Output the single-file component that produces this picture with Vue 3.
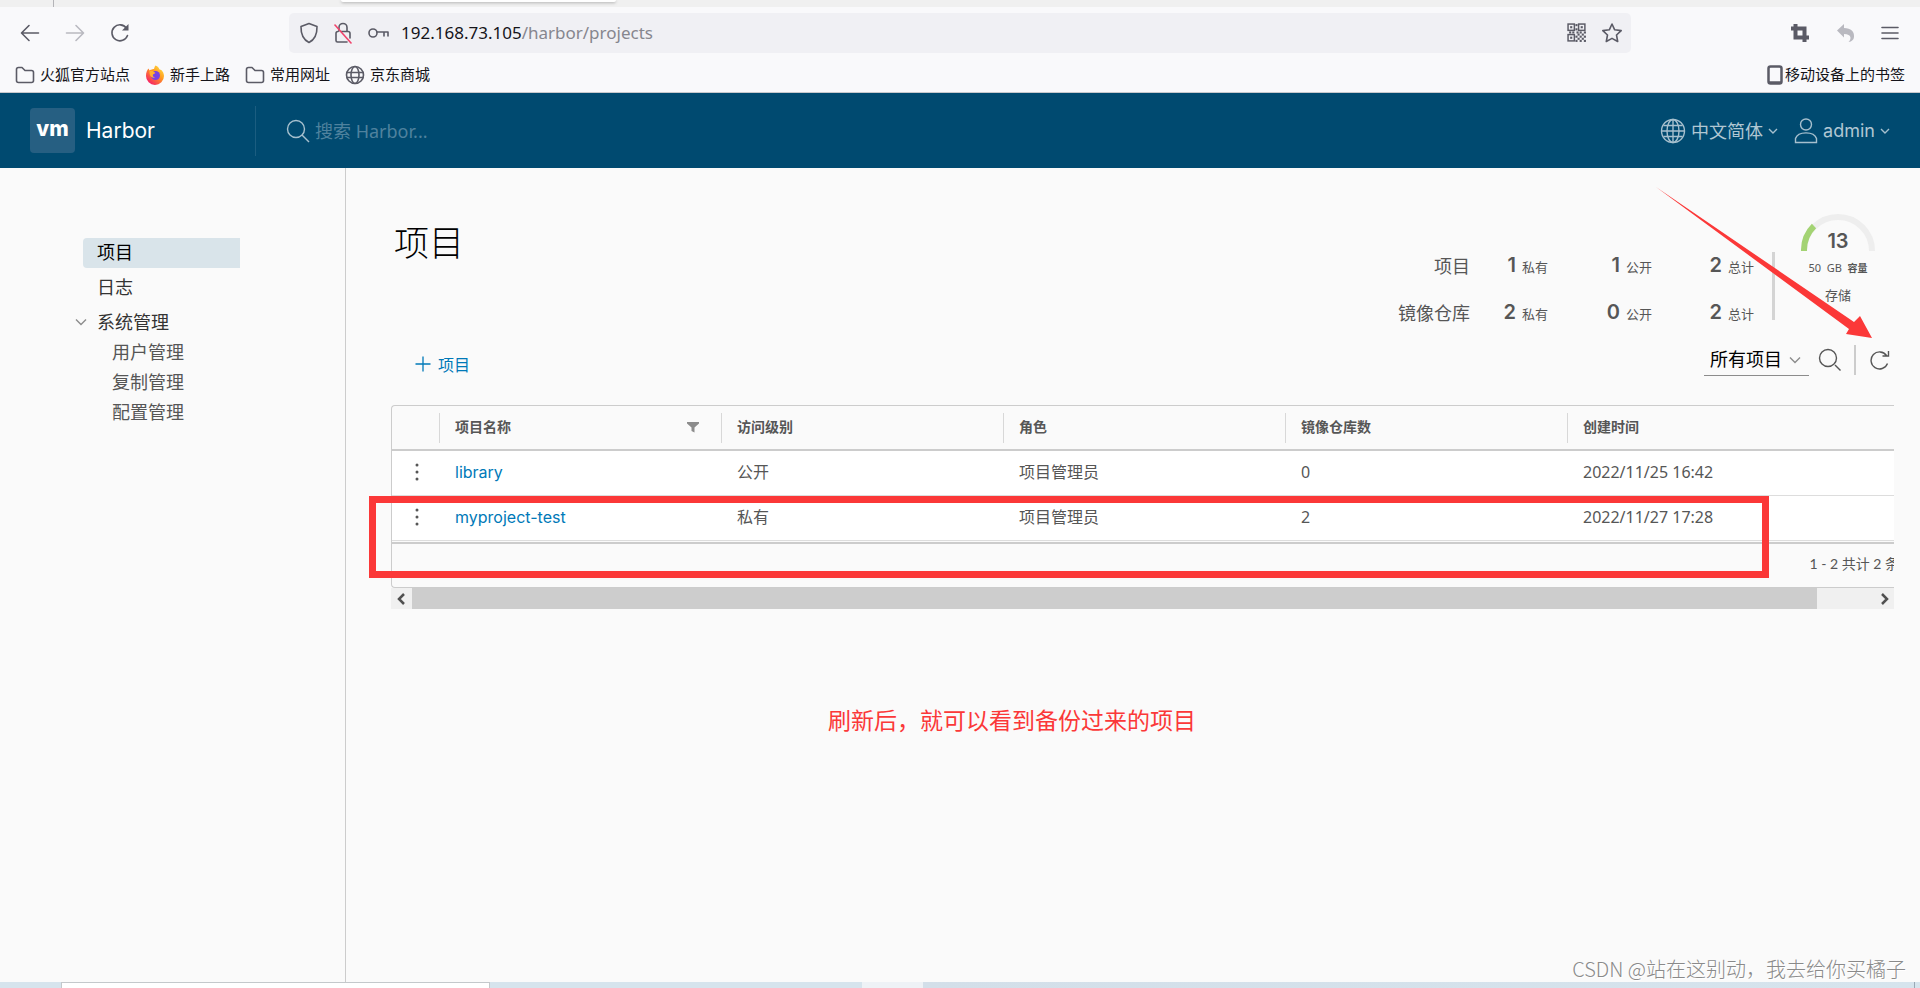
<script setup>
import { ref } from 'vue'

const query = ref('')
const scope = ref('所有项目')

const bookmarks = [
  { icon: 'folder', text: '火狐官方站点' },
  { icon: 'firefox', text: '新手上路' },
  { icon: 'folder', text: '常用网址' },
  { icon: 'globe', text: '京东商城' },
]

const adminLinks = ['用户管理', '复制管理', '配置管理']

const stats = [
  { label: '项目', values: [[1, '私有'], [1, '公开'], [2, '总计']] },
  { label: '镜像仓库', values: [[2, '私有'], [0, '公开'], [2, '总计']] },
]

const projects = [
  { name: 'library', access: '公开', role: '项目管理员', repos: 0, created: '2022/11/25 16:42' },
  { name: 'myproject-test', access: '私有', role: '项目管理员', repos: 2, created: '2022/11/27 17:28' },
]

const qrFinders = [[1, 1], [11, 1], [1, 11]]
const qrDots = [[8, 1], [8, 5], [9, 8], [2, 8], [5, 8], [12, 8], [16, 8], [10, 10], [14, 10], [12, 12], [16, 12], [10, 14], [14, 14], [12, 16], [16, 16], [8, 12], [8, 16]]
</script>

<template>
  <div class="screen">
    <div class="tabs"><span class="tab-line"></span><span class="tab-active"></span></div>

    <div class="browser-bar">
      <div class="nav-buttons">
        <button type="button" aria-label="后退">
          <svg width="20" height="20" viewBox="0 0 20 20" class="ico dark"><path d="M18.500 10H2M9 2.500L1.500 10L9 17.500" /></svg>
        </button>
        <button type="button" aria-label="前进">
          <svg width="20" height="20" viewBox="0 0 20 20" class="ico pale"><path d="M1.500 10H18M11 2.500L18.500 10L11 17.500" /></svg>
        </button>
        <button type="button" aria-label="刷新">
          <svg width="20" height="20" viewBox="0 0 20 20" class="ico dark"><path d="M17.500 12.500A8 8 0 1 1 16.500 5.200" /><path class="fill" d="M18.500 1V7.500H12Z" /></svg>
        </button>
      </div>

      <div class="url-bar">
        <svg width="20" height="22" viewBox="0 0 20 22" class="ico dark"><path d="M10 1.500L18 4.500C18.200 12 16 17.500 10 20.500C4 17.500 1.800 12 2 4.500Z" /></svg>
        <svg width="20" height="22" viewBox="0 0 20 22" class="ico dark"><path d="M6 9V5.500A4 4 0 0 1 14 5.500V9M8 9.500H15Q17 9.500 17 11.500V16M14 20H4.500Q3 20 3 18.500V11.500Q3 9.500 5 9.500" /><path class="strike" d="M2 3L18 21" /></svg>
        <svg width="22" height="22" viewBox="0 0 22 22" class="ico dark"><circle cx="6" cy="11" r="4" /><path d="M10 10H21V14M17 10V14" /></svg>
        <span class="url"><b>192.168.73.105</b>/harbor/projects</span>
        <svg width="20" height="20" viewBox="0 0 19 19" class="qr">
          <g v-for="p in qrFinders" :key="p.join('-')">
            <rect class="finder" :x="p[0]" :y="p[1]" width="6" height="6" />
            <rect :x="p[0] + 2" :y="p[1] + 2" width="2" height="2" />
          </g>
          <rect v-for="d in qrDots" :key="d.join('.')" :x="d[0]" :y="d[1]" width="2" height="2" />
        </svg>
        <svg width="22" height="22" viewBox="0 0 22 22" class="ico dark star"><path d="M11 2L13.700 7.800L20.200 8.600L15.500 13L16.700 19.500L11 16.400L5.300 19.500L6.500 13L1.800 8.600L8.300 7.800Z" /></svg>
      </div>

      <div class="tools">
        <button type="button" aria-label="截图">
          <svg width="20" height="20" viewBox="0 0 20 20" class="ico dark crop"><path d="M1 5.500H14.500V19M5.500 1V14.500H19" /></svg>
        </button>
        <button type="button" aria-label="撤销">
          <svg width="20" height="20" viewBox="0 0 20 20" class="undo"><path d="M1 7.500L8 1V5C15 5 18.500 8.500 18 14C17.700 16.800 16 18.500 12.500 19C15.500 16.500 16 11 8 11V14.500Z" /></svg>
        </button>
        <button type="button" aria-label="菜单">
          <svg width="18" height="18" viewBox="0 0 18 18" class="ico dark"><path d="M1 3.500H17M1 9H17M1 14.500H17" /></svg>
        </button>
      </div>
    </div>

    <div class="bookmarks">
      <a v-for="b in bookmarks" :key="b.text" href="#">
        <svg v-if="b.icon === 'folder'" width="20" height="20" viewBox="0 0 20 20" class="ico dark"><path d="M1.500 15.500V4.500Q1.500 2.500 3.500 2.500H7L10 5.500H16.500Q18.500 5.500 18.500 7.500V15.500Q18.500 17.500 16.500 17.500H3.500Q1.500 17.500 1.500 15.500Z" /></svg>
        <svg v-else-if="b.icon === 'firefox'" width="20" height="20" viewBox="0 0 20 20">
          <defs>
            <linearGradient id="flame" x1="1" y1="0" x2="0.2" y2="1">
              <stop offset="0" stop-color="#fff44f" /><stop offset="0.45" stop-color="#ff9a1f" /><stop offset="1" stop-color="#f5156c" />
            </linearGradient>
          </defs>
          <path fill="url(#flame)" d="M10.500 0.500C13 1.500 14 3 14.500 4.500C16 4 19 7 19 11A9 9 0 0 1 1 11C1 7.500 2.200 5 3.500 3.500L4.500 5.500C6 4.500 8 4 9 4C9.500 2.500 9.600 1.500 10.500 0.500Z" />
          <circle cx="10.500" cy="10.500" r="4.500" fill="#7542e5" />
          <path fill="#ffb22e" d="M4.500 6C7 5 9 6.500 10.500 8L8 9.500C7.500 10.500 8 12 10 12.500C7 13.500 4 11 4.500 6Z" />
        </svg>
        <svg v-else width="20" height="20" viewBox="0 0 20 20" class="ico dark"><circle cx="10" cy="10" r="8.500" /><ellipse cx="10" cy="10" rx="4" ry="8.500" /><path d="M2 7.500H18M2 12.500H18" /></svg>
        <span>{{ b.text }}</span>
      </a>
      <a href="#" class="mobile">
        <svg width="16" height="20" viewBox="0 0 16 20" class="phone"><rect x="1.500" y="1.500" width="13" height="17" rx="2" /><path d="M1.500 17.500H14.500" /></svg>
        <span>移动设备上的书签</span>
      </a>
    </div>

    <header class="app-header">
      <a href="#" class="brand"><span class="logo">vm</span><span class="brand-name">Harbor</span></a>
      <label class="search">
        <svg width="24" height="24" viewBox="0 0 24 24" class="thin"><circle cx="10" cy="10" r="8.500" /><path d="M16 16L23 23" /></svg>
        <input v-model="query" type="text" placeholder="搜索 Harbor..." aria-label="搜索 Harbor" />
      </label>
      <div class="account">
        <button type="button">
          <svg width="26" height="26" viewBox="0 0 26 26" class="thin"><circle cx="13" cy="13" r="11.500" /><ellipse cx="13" cy="13" rx="6" ry="11.500" /><path d="M13 1.500V24.500M1.500 13H24.500M3.500 7.500H22.500M3.500 18.500H22.500" /></svg>
          <span>中文简体</span>
          <svg width="10" height="10" viewBox="0 0 10 10" class="thin"><path d="M1 3L5 7L9 3" /></svg>
        </button>
        <button type="button">
          <svg width="24" height="26" viewBox="0 0 24 26" class="thin"><circle cx="12" cy="6.500" r="5.500" /><path d="M1.500 24.500V20.500C4 13 20 13 22.500 20.500V24.500Z" /></svg>
          <span>admin</span>
          <svg width="10" height="10" viewBox="0 0 10 10" class="thin"><path d="M1 3L5 7L9 3" /></svg>
        </button>
      </div>
    </header>

    <div class="body">
      <nav class="sidebar">
        <a href="#" class="active">项目</a>
        <a href="#">日志</a>
        <div class="group">
          <button type="button" class="group-title">
            <svg width="12" height="12" viewBox="0 0 12 12"><path d="M1 3.500L6 8.500L11 3.500" /></svg>
            <span>系统管理</span>
          </button>
          <a v-for="l in adminLinks" :key="l" href="#" class="sub">{{ l }}</a>
        </div>
      </nav>

      <main class="main">
        <section class="summary">
          <h1>项目</h1>
          <div class="stats">
            <template v-for="s in stats" :key="s.label">
              <span class="stat-label">{{ s.label }}</span>
              <span v-for="v in s.values" :key="v[1]" class="stat"><b>{{ v[0] }}</b>{{ v[1] }}</span>
            </template>
          </div>
          <div class="gauge">
            <div class="dial">
              <svg width="76" height="39" viewBox="0 0 76 39">
                <path class="track" d="M4 39A34 34 0 0 1 72 39" />
                <path class="value" d="M4 39A34 34 0 0 1 14 14" />
              </svg>
              <b>13</b>
            </div>
            <span class="capacity">50 &nbsp;GB &nbsp;<b>容量</b></span>
            <span class="storage">存储</span>
          </div>
        </section>

        <section class="toolbar">
          <button type="button" class="new">
            <svg width="16" height="16" viewBox="0 0 16 16"><path d="M8 0.500V15.500M0.500 8H15.500" /></svg>
            <span>项目</span>
          </button>
          <div class="filters">
            <span class="select">
              <select v-model="scope" aria-label="项目范围"><option>所有项目</option></select>
              <svg width="12" height="12" viewBox="0 0 12 12"><path d="M1 3.500L6 8.500L11 3.500" /></svg>
            </span>
            <button type="button" aria-label="搜索">
              <svg width="24" height="24" viewBox="0 0 24 24"><circle cx="10" cy="10" r="8.500" /><path d="M17 17L22.500 22.500" /></svg>
            </button>
            <button type="button" aria-label="刷新" class="reload">
              <svg width="20" height="22" viewBox="0 0 20 22"><path d="M17.500 14.500A8.500 8.500 0 1 1 16.500 6.500M18.500 2V7H12.500" /></svg>
            </button>
          </div>
        </section>

        <section class="grid-area">
          <div class="grid-view">
            <table>
              <colgroup><col class="c-action" /><col class="c" /><col class="c" /><col class="c" /><col class="c" /><col /></colgroup>
              <thead>
                <tr>
                  <th></th>
                  <th>
                    <div class="th">
                      项目名称
                      <button type="button" aria-label="筛选"><svg width="12" height="12" viewBox="0 0 12 12"><path d="M0 1H12V2.500L7.500 6.500V11.500L4.500 10V6.500L0 2.500Z" /></svg></button>
                    </div>
                  </th>
                  <th><div class="th">访问级别</div></th>
                  <th><div class="th">角色</div></th>
                  <th><div class="th">镜像仓库数</div></th>
                  <th><div class="th">创建时间</div></th>
                </tr>
              </thead>
              <tbody>
                <tr v-for="p in projects" :key="p.name">
                  <td class="action">
                    <button type="button" aria-label="操作"><svg width="4" height="18" viewBox="0 0 4 18"><circle cx="2" cy="2" r="1.500" /><circle cx="2" cy="9" r="1.500" /><circle cx="2" cy="16" r="1.500" /></svg></button>
                  </td>
                  <td><a href="#">{{ p.name }}</a></td>
                  <td>{{ p.access }}</td>
                  <td>{{ p.role }}</td>
                  <td>{{ p.repos }}</td>
                  <td>{{ p.created }}</td>
                </tr>
              </tbody>
            </table>
            <div class="pager">1 - 2 共计 2 条</div>
          </div>
          <div class="scrollbar">
            <button type="button" aria-label="向左滚动"><svg width="10" height="12" viewBox="0 0 10 12"><path d="M7 1L2 6L7 11" /></svg></button>
            <span class="thumb"></span>
            <button type="button" aria-label="向右滚动"><svg width="10" height="12" viewBox="0 0 10 12"><path d="M3 1L8 6L3 11" /></svg></button>
          </div>
          <div class="mark-box"></div>
        </section>

        <p class="note">刷新后，就可以看到备份过来的项目</p>

        <svg class="mark-arrow" width="217" height="152" viewBox="0 0 217 152"><path d="M0 0L198 135L204 129L216 151L190 147L193 142Z" /></svg>
      </main>
    </div>

    <div class="desk"><span class="desk-window"></span><span class="desk-light"></span><span class="desk-rest"></span></div>
    <div class="watermark">CSDN @站在这别动，我去给你买橘子</div>
  </div>
</template>

<style>
body { margin: 0; background: #fafafa; }
</style>

<style scoped>
* { box-sizing: border-box; }
.screen {
  position: relative;
  min-height: 100vh;
  display: flex;
  flex-direction: column;
  overflow: hidden;
  background: #fafafa;
  color: #565656;
  font-family: "Noto Sans", "Noto Sans CJK SC", sans-serif;
  font-size: 16px;
}
a { color: inherit; text-decoration: none; }
button {
  display: flex;
  align-items: center;
  padding: 0;
  border: 0;
  background: none;
  color: inherit;
  font: inherit;
}
svg { display: block; flex: none; }

.ico { fill: none; stroke-width: 1.600; stroke-linecap: round; stroke-linejoin: round; }
.dark { stroke: #5b5b66; }
.pale { stroke: #b9b9c0; }
.ico .fill { fill: #5b5b66; stroke: none; }
.ico .strike { stroke: #f0436b; }
.crop { stroke-width: 4; stroke-linecap: butt; stroke-linejoin: miter; }
.undo { fill: #b9b9c0; }

.tabs { display: flex; height: 7px; background: #f0f0f0; }
.tab-line { width: 54px; border-right: 1px solid #b4b4b8; }
.tab-active { width: 275px; height: 2px; margin-left: 287px; border-radius: 0 0 4px 4px; background: #fff; box-shadow: 0 1px 3px #aaa; }

.browser-bar { display: flex; align-items: center; height: 51px; padding: 0 20px; background: #f9f9fb; }
.nav-buttons { display: flex; gap: 25px; width: 269px; }
.url-bar {
  flex: 1;
  display: flex;
  align-items: center;
  gap: 14px;
  height: 40px;
  padding: 0 8px 0 10px;
  border-radius: 5px;
  background: #f0f0f4;
  color: #86868e;
}
.url { flex: 1; margin-left: -2px; font-size: 17px; }
.url b { color: #15141a; font-weight: 400; }
.qr { fill: #5b5b66; }
.qr .finder { fill: none; stroke: #5b5b66; stroke-width: 1.400; }
.tools { display: flex; justify-content: space-between; align-items: center; width: 109px; margin: 0 1px 0 159px; }

.bookmarks { display: flex; align-items: center; gap: 15px; height: 35px; padding: 0 15px; border-bottom: 1px solid #c8c8cc; background: #f9f9fb; color: #15141a; font-size: 15px; line-height: 20px; }
.bookmarks a { display: flex; align-items: center; gap: 5px; }
.bookmarks span { padding-bottom: 2px; }
.bookmarks .mobile { margin-left: auto; gap: 2px; }
.phone { fill: none; stroke: #5b5b66; stroke-width: 2.500; }

.app-header { display: flex; align-items: center; height: 75px; padding: 0 30px; background: #004a70; color: #b0c7d3; font-size: 18px; font-family: Inter, "Noto Sans CJK SC", sans-serif; }
.brand { display: flex; align-items: center; gap: 11px; width: 226px; height: 50px; border-right: 1px solid #1b5d80; }
.logo { width: 45px; height: 45px; border-radius: 4px; background: #265f82; color: #fff; font-size: 21px; font-weight: 800; line-height: 42px; text-align: center; }
.brand-name { color: #fff; font-size: 21px; }
.search { flex: 1; display: flex; align-items: center; gap: 5px; padding-left: 30px; }
.search input { flex: 1; padding: 0; border: 0; outline: 0; background: none; color: #fff; font: inherit; font-family: "Noto Sans", "Noto Sans CJK SC", sans-serif; }
.search input::placeholder { color: #4f829e; opacity: 1; }
.account { display: flex; gap: 16px; }
.account button { gap: 5px; }
.account span { padding-bottom: 1px; }
.thin { fill: none; stroke: #a6c0ce; stroke-width: 1.400; }

.body { flex: 1; display: flex; }
.sidebar { display: flex; flex-direction: column; gap: 5px; width: 346px; padding: 70px 105px 0 83px; border-right: 1px solid #ccc; color: #333; font-size: 18px; line-height: 28px; }
.sidebar a, .group-title { padding-bottom: 2px; }
.sidebar a { padding-left: 14px; }
.sidebar .active { border-radius: 4px 0 0 4px; background: #d9e4ea; color: #000; }
.group { display: flex; flex-direction: column; }
.group-title { gap: 10px; margin-left: -8px; }
.group-title svg { fill: none; stroke: #8c8c8c; stroke-width: 1.400; }
.sidebar .sub { padding-left: 29px; color: #565656; }

.main { position: relative; flex: 1; min-width: 0; padding: 0 26px 0 45px; }
.summary { display: flex; height: 171px; padding-right: 18px; }
h1 { flex: 1; margin: 51px 0 0 3px; color: #000; font-size: 35px; font-weight: 300; line-height: 48px; }
.stats { position: relative; display: grid; grid-template-columns: 72px 78px 104px 102px; grid-template-rows: 47px 47px; align-items: center; justify-items: end; align-self: start; margin-top: 73px; padding-right: 21px; }
.stats::after { content: ""; position: absolute; right: 0; top: 11px; width: 3px; height: 68px; background: #d4d4d4; }
.stat-label { font-size: 18px; }
.stat { display: flex; align-items: baseline; gap: 6px; font-size: 13px; }
.stat b, .dial b { font-family: Inter, sans-serif; font-size: 20px; font-weight: 600; line-height: 24px; }
.gauge { display: flex; flex-direction: column; align-items: center; width: 76px; margin: 44px 0 0 25px; }
.dial { display: grid; justify-items: center; align-items: end; }
.dial > * { grid-area: 1 / 1; }
.dial b { line-height: 20px; }
.dial path { fill: none; stroke-width: 6; }
.dial .track { stroke: #eee; }
.dial .value { stroke: #a3d373; }
.capacity { margin-top: 9px; font-size: 11px; line-height: 16px; white-space: nowrap; }
.capacity b { font-size: 10px; font-weight: 600; }
.storage { margin-top: 9px; font-size: 13px; line-height: 20px; }

.toolbar { display: flex; justify-content: space-between; align-items: center; height: 42px; padding: 0 4px 0 24px; }
.new { gap: 7px; margin-top: 8px; color: #0079b8; }
.new svg { fill: none; stroke: #0079b8; stroke-width: 1.300; }
.filters { display: flex; align-items: center; gap: 9px; }
.filters svg { fill: none; stroke: #565656; stroke-width: 1.400; }
.select { display: flex; align-items: center; width: 105px; height: 32px; border-bottom: 1px solid #8c8c8c; }
.select select { flex: 1; width: 100%; margin-right: -20px; padding: 0 0 2px 6px; border: 0; outline: 0; appearance: none; background: none; color: #000; font: inherit; font-size: 18px; line-height: 28px; }
.select svg { margin-right: 8px; stroke: #8c8c8c; pointer-events: none; }
.filters .reload { height: 30px; padding-left: 14px; margin-left: 3px; border-left: 2px solid #ccc; }

.grid-area { position: relative; margin-top: 24px; }
.grid-view { overflow: hidden; border: 1px solid #ccc; border-right: 0; border-radius: 4px 0 0 4px; }
table { width: 104%; table-layout: fixed; border-collapse: separate; border-spacing: 0; }
.c-action { width: 47px; }
.c { width: 282px; }
th { height: 45px; padding: 0; border-bottom: 2px solid #ccc; font-size: 14px; font-weight: 700; line-height: 28px; text-align: left; }
.th { display: flex; justify-content: space-between; align-items: center; height: 30px; padding: 0 22px 2px 15px; border-left: 1px solid #d8d8d8; }
.th svg { fill: #8c8c8c; }
td { height: 45px; padding: 0 16px 3px; border-bottom: 1px solid #ddd; background: #fff; line-height: 24px; }
td a { color: #0079b8; font-family: Inter, sans-serif; }
td.action { padding: 0 0 3px 23px; }
.action svg { fill: #565656; }
.pager { width: 104%; height: 45px; padding-right: 55px; border-top: 2px solid #ccc; margin-top: 1px; font-size: 14px; line-height: 40px; text-align: right; font-family: Lato, "Noto Sans CJK SC", sans-serif; }
.scrollbar { display: flex; align-items: stretch; height: 21px; background: #f0f0f0; }
.scrollbar button { width: 21px; justify-content: center; }
.scrollbar button:last-child { margin-left: auto; }
.scrollbar path { fill: none; stroke: #505050; stroke-width: 2.500; }
.thumb { width: 93.500%; background: #cdcdcd; }

.mark-box { position: absolute; top: 91px; left: -22px; right: 125px; height: 82px; border: 7px solid #fb3838; }
.mark-arrow { position: absolute; top: 19px; right: 47px; fill: #fb3838; }
.note { margin: 94px 0 0 437px; color: #fb3838; font-size: 23px; line-height: 34px; }

.desk { display: flex; height: 6px; background: #d6e4ed; }
.desk-window { width: 429px; margin-left: 61px; border: 1px solid #c4c8cb; border-bottom: 0; background: #fff; }
.desk-light { width: 61px; margin-left: 372px; background: #eef2f6; }
.desk-rest { flex: 1; margin-right: 5px; border-right: 1px solid #9aa8b4; background: linear-gradient(90deg, #d3dfe9, #d6e4ed); }
.watermark { position: absolute; right: 14px; bottom: 4px; color: #8a8a8a; font-family: "Noto Sans CJK SC", sans-serif; font-size: 20px; font-weight: 300; line-height: 30px; text-shadow: 1px 1px 0 #fff; }
</style>
